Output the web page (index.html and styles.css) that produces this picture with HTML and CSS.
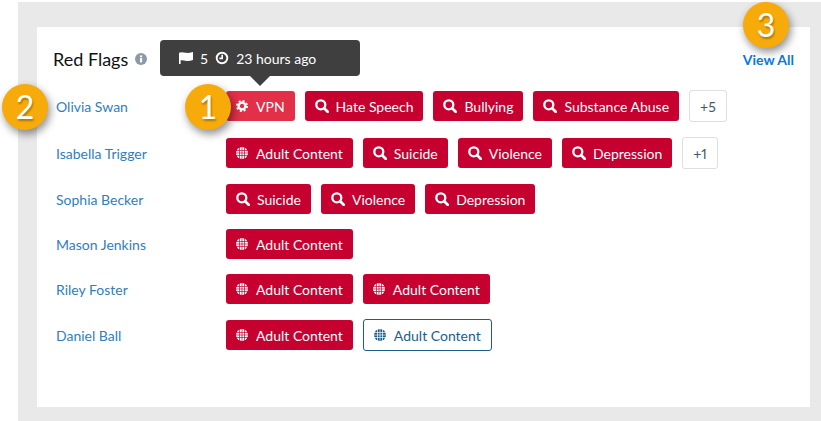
FILE: index.html
```html
<!DOCTYPE html>
<html lang="en">
<head>
    <meta charset="UTF-8">
    <title>Red Flags</title>
    <link rel="stylesheet" href="styles.css">
</head>
<body>
    <svg class="defs" width="0" height="0">
        <symbol id="i-search" viewBox="0 0 14 14">
            <circle cx="5.800" cy="5.800" r="4.500" fill="none" stroke="currentColor" stroke-width="2.300"/>
            <path d="M9.200 9.200l3.500 3.500" stroke="currentColor" stroke-width="2.700" stroke-linecap="round"/>
        </symbol>
        <symbol id="i-globe" viewBox="0 0 12 12">
            <circle cx="6" cy="6" r="6" fill="currentColor"/>
            <path d="M0 3.500h12M0 6h12M0 8.500h12M3.500 0v12M6 0v12M8.500 0v12" stroke="var(--grid)" stroke-width=".7"/>
        </symbol>
        <symbol id="i-gear" viewBox="0 0 12 12">
            <circle cx="6" cy="6" r="3.400" fill="none" stroke="currentColor" stroke-width="2.400"/>
            <circle cx="6" cy="6" r="5" fill="none" stroke="currentColor" stroke-width="2" stroke-dasharray="1.960 1.967"/>
        </symbol>
    </svg>

    <div class="frame">
        <div class="card">
            <div class="card-head">
                <h2>Red Flags</h2>
                <svg class="info" viewBox="0 0 12 12"><circle cx="6" cy="6" r="6" fill="#8c99a8"/><rect x="5" y="5" width="2.100" height="4.400" fill="#fff"/><rect x="5" y="2.400" width="2.100" height="1.800" fill="#fff"/></svg>
                <a class="view-all" href="#">View All</a>
            </div>

            <div class="flag-row">
                <a class="name" href="#">Olivia Swan</a>
                <div class="flags">
                    <span class="flag flag-light"><svg class="ico"><use href="#i-gear"/></svg>VPN</span>
                    <span class="flag"><svg class="ico ico-search"><use href="#i-search"/></svg>Hate Speech</span>
                    <span class="flag"><svg class="ico ico-search"><use href="#i-search"/></svg>Bullying</span>
                    <span class="flag"><svg class="ico ico-search"><use href="#i-search"/></svg>Substance Abuse</span>
                    <span class="more">+5</span>
                </div>
            </div>
            <div class="flag-row">
                <a class="name" href="#">Isabella Trigger</a>
                <div class="flags">
                    <span class="flag"><svg class="ico"><use href="#i-globe"/></svg>Adult Content</span>
                    <span class="flag"><svg class="ico ico-search"><use href="#i-search"/></svg>Suicide</span>
                    <span class="flag"><svg class="ico ico-search"><use href="#i-search"/></svg>Violence</span>
                    <span class="flag"><svg class="ico ico-search"><use href="#i-search"/></svg>Depression</span>
                    <span class="more">+1</span>
                </div>
            </div>
            <div class="flag-row">
                <a class="name" href="#">Sophia Becker</a>
                <div class="flags">
                    <span class="flag"><svg class="ico ico-search"><use href="#i-search"/></svg>Suicide</span>
                    <span class="flag"><svg class="ico ico-search"><use href="#i-search"/></svg>Violence</span>
                    <span class="flag"><svg class="ico ico-search"><use href="#i-search"/></svg>Depression</span>
                </div>
            </div>
            <div class="flag-row">
                <a class="name" href="#">Mason Jenkins</a>
                <div class="flags">
                    <span class="flag"><svg class="ico"><use href="#i-globe"/></svg>Adult Content</span>
                </div>
            </div>
            <div class="flag-row">
                <a class="name" href="#">Riley Foster</a>
                <div class="flags">
                    <span class="flag"><svg class="ico"><use href="#i-globe"/></svg>Adult Content</span>
                    <span class="flag"><svg class="ico"><use href="#i-globe"/></svg>Adult Content</span>
                </div>
            </div>
            <div class="flag-row">
                <a class="name" href="#">Daniel Ball</a>
                <div class="flags">
                    <span class="flag"><svg class="ico"><use href="#i-globe"/></svg>Adult Content</span>
                    <span class="flag flag-outline"><svg class="ico"><use href="#i-globe"/></svg>Adult Content</span>
                </div>
            </div>
        </div>
    </div>

    <div class="tooltip">
        <svg class="tip-ico" viewBox="0 0 14 14"><path fill="#fff" d="M0 1.800c2.800-1.300 4.600-.3 6.500 0 2 .3 4.500.1 7.500-.8v8c-3 1-5.500 1.100-7.500.7C4.800 9.400 3.200 8.900 1.600 9.400V13H0z"/></svg>
        <span class="tip-count">5</span>
        <svg class="tip-ico" viewBox="0 0 14 14"><circle cx="7" cy="7" r="5.300" fill="none" stroke="#fff" stroke-width="1.900"/><path d="M7.200 3.800v3.600H4.400" fill="none" stroke="#fff" stroke-width="1.600"/></svg>
        <span>23 hours ago</span>
    </div>

    <div class="callout callout-1">1</div>
    <div class="callout callout-2">2</div>
    <div class="callout callout-3">3</div>
</body>
</html>
```

FILE: styles.css
```css
* {
    margin: 0;
    padding: 0;
    box-sizing: border-box;
}

html, body {
    height: 421px;
    overflow: hidden;
}

body {
    font-family: Lato, 'Open Sans', sans-serif;
    font-size: 14px;
    background: white;
    position: relative;
    padding: 2px 0 0 18px;
}

.defs {
    position: absolute;
}

.frame {
    background: #e9e9e9;
    height: 419px;
    padding: 25px 11px 14px 19px;
}

.card {
    background: white;
    height: 380px;
    padding: 21px 16px 0 19px;
}

.card-head {
    display: flex;
    align-items: center;
    height: 22px;
    margin-bottom: 20px;
}

.card-head h2 {
    margin-left: -3px;
    font-size: 18px;
    font-weight: 400;
    color: #111;
}

.info {
    width: 12px;
    height: 12px;
    margin-left: 7px;
}

.view-all {
    margin-left: auto;
    color: #0a78dc;
    font-size: 14px;
    font-weight: 700;
    text-decoration: none;
}

.flag-row {
    display: flex;
    align-items: center;
    margin-bottom: 15px;
}

.name {
    width: 170px;
    flex-shrink: 0;
    color: #2f7ec0;
    text-decoration: none;
}

.flags {
    display: flex;
    align-items: center;
    gap: 10px;
}

.flag {
    --grid: #c6002f;
    display: flex;
    align-items: center;
    height: 30px;
    padding: 0 10px;
    background: #c6002f;
    color: white;
    border-radius: 3px;
    white-space: nowrap;
}

.flag-light {
    --grid: #e23049;
    background: #e23049;
}

.flag-outline {
    --grid: white;
    height: 32px;
    background: white;
    color: #1b5e8c;
    border: 1px solid #1b5e8c;
}

.ico {
    width: 12px;
    height: 12px;
    margin-right: 8px;
}

.ico-search {
    width: 14px;
    height: 14px;
    margin-right: 7px;
}

.more {
    display: flex;
    align-items: center;
    height: 32px;
    padding: 0 10px;
    border: 1px solid #dcdfe3;
    border-radius: 3px;
    color: #45566a;
    font-variant-numeric: proportional-nums;
}

.tooltip {
    position: absolute;
    left: 160px;
    top: 40px;
    width: 200px;
    height: 36px;
    display: flex;
    align-items: center;
    padding-left: 19px;
    background: #3f3f3f;
    color: white;
    border-radius: 4px;
}

.tooltip::after {
    content: '';
    position: absolute;
    left: 90px;
    top: 36px;
    border: 10px solid transparent;
    border-top-color: #3f3f3f;
    border-bottom: 0;
}

.tip-ico {
    width: 14px;
    height: 14px;
    margin-right: 7px;
}

.tip-count {
    margin-right: 7px;
}

.callout {
    position: absolute;
    width: 46px;
    height: 46px;
    border-radius: 50%;
    background: #f7ab0a;
    color: white;
    font-size: 32px;
    line-height: 46px;
    text-align: center;
    box-shadow: 2px 4px 8px rgba(0,0,0,0.45);
    text-shadow: 1px 2px 2px rgba(0,0,0,0.3);
}

.callout-1 {
    left: 185px;
    top: 84px;
}

.callout-2 {
    left: 2px;
    top: 84px;
}

.callout-3 {
    left: 743px;
    top: 2px;
}
```
